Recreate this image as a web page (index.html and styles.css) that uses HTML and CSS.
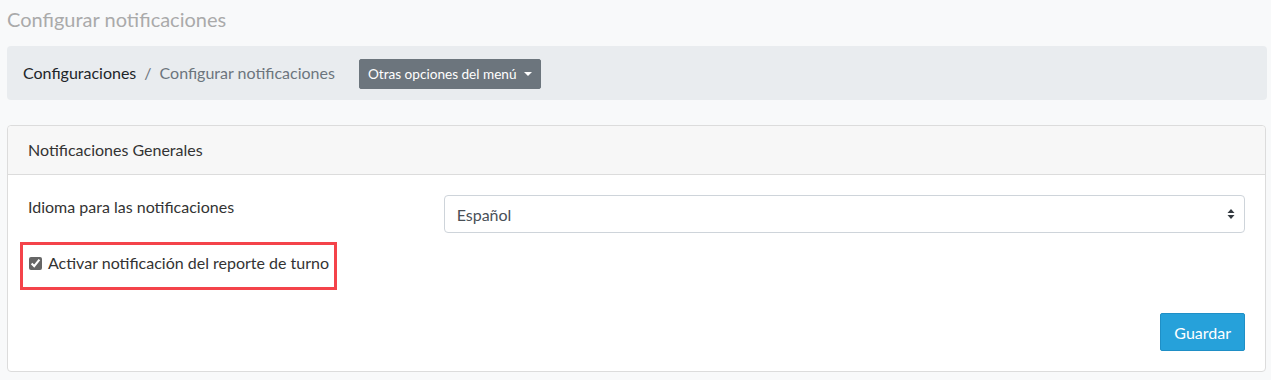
FILE: index.html
```html
<!doctype html>
<html>

<head>
	<meta charset=utf-8>
	<title>Configurar notificaciones</title>
	<meta name=viewport content="width=device-width, initial-scale=1">
	<link rel="stylesheet" href="styles.css">
</head>

<body>
	<h1 class="page-title">Configurar notificaciones</h1>

	<nav class="crumbs">
		<a class="crumb-link" href="#">Configuraciones</a>
		<span class="crumb-sep">/</span>
		<span class="crumb-current">Configurar notificaciones</span>
		<button class="btn-menu">Otras opciones del menú <span class="caret"></span></button>
	</nav>

	<section class="card">
		<div class="card-header">Notificaciones Generales</div>
		<div class="card-body">
			<div class="form-row">
				<label class="form-label" for="idioma">Idioma para las notificaciones</label>
				<div class="select-wrap">
					<select id="idioma" class="select">
						<option>Español</option>
						<option>English</option>
					</select>
					<svg class="select-arrows" width="8" height="12" viewBox="0 0 8 12"><path d="M4 1 L7.5 5 L0.5 5 Z M4 11 L7.5 7 L0.5 7 Z" fill="#343a40"/></svg>
				</div>
			</div>

			<div class="highlight">
				<label class="check">
					<input type="checkbox" checked>
					<span>Activar notificación del reporte de turno</span>
				</label>
			</div>

			<div class="actions">
				<button class="btn-save">Guardar</button>
			</div>
		</div>
	</section>
</body>
</html>
```

FILE: styles.css
```css
html, body{
	margin: 0; padding: 0;
	box-sizing: border-box;
	background-color: #f8f9fa;
	color: #212529;
	font-family: Lato, "Open Sans", sans-serif;
	font-size: 16px;
}

*, *:after, *:before{
	box-sizing: inherit;
}

body{
	padding: 0 4px 0 7px;
}

.page-title{
	margin: 0;
	padding: 6px 0 0;
	height: 46px;
	font-size: 20px;
	font-weight: 400;
	line-height: 26px;
	color: #aaa;
}

.crumbs{
	display: flex;
	align-items: center;
	height: 54px;
	padding: 0 16px;
	background-color: #e9ecef;
	border-radius: 4px;
	line-height: 24px;
}

.crumb-link{
	color: #212529;
	text-decoration: none;
}

.crumb-sep{
	color: #6c757d;
	padding: 0 8px;
}

.crumb-current{
	color: #6c757d;
}

.btn-menu{
	margin: 2px 0 0 24px;
	height: 30px;
	padding: 0 8px;
	background-color: #6c757d;
	color: #fff;
	border: 1px solid #6c757d;
	border-radius: 2px;
	font-family: inherit;
	font-size: 13.6px;
}

.caret{
	display: inline-block;
	margin-left: 4px;
	vertical-align: 3px;
	border-top: 4px solid #fff;
	border-left: 4px solid transparent;
	border-right: 4px solid transparent;
}

.card{
	margin-top: 25px;
	margin-right: 1px;
	background-color: #fff;
	border: 1px solid #dcdcdc;
	border-radius: 4px;
}

.card-header{
	height: 49px;
	padding: 13px 20px;
	line-height: 22px;
	background-color: #f7f7f7;
	border-bottom: 1px solid #dcdcdc;
	border-radius: 4px 4px 0 0;
	color: #333;
}

.card-body{
	padding: 20px 20px 20px;
}

.form-row{
	display: flex;
}

.form-label{
	flex: 0 0 calc((100% + 30px) / 3);
	line-height: 24px;
	color: #333;
}

.select-wrap{
	position: relative;
	flex: 1;
}

.select{
	display: block;
	width: 100%;
	height: 38px;
	padding: 0 12px;
	font-family: inherit;
	font-size: 16px;
	color: #495057;
	background-color: #fff;
	border: 1px solid #ced4da;
	border-radius: 4px;
	appearance: none;
}

.select-arrows{
	position: absolute;
	right: 10px;
	top: 13px;
}

.highlight{
	display: inline-block;
	margin: 9px 0 0 -8px;
	width: 317px;
	height: 48px;
	padding: 6px 0 0 6px;
	border: 3px solid #f4434a;
}

.check{
	display: flex;
	align-items: center;
	gap: 6px;
	color: #333;
	line-height: 24px;
}

.check input{
	margin: 0;
	width: 13px;
	height: 13px;
	accent-color: #666;
}

.actions{
	display: flex;
	justify-content: flex-end;
	margin-top: 23px;
}

.btn-save{
	height: 38px;
	padding: 0 13px;
	background-color: #26a1da;
	border: 1px solid #1f8fc6;
	border-radius: 2px;
	color: #fff;
	font-family: inherit;
	font-size: 16px;
}
```
